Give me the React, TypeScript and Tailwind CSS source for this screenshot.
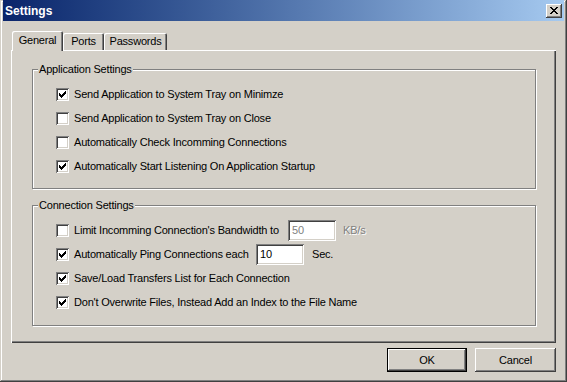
import type { ReactNode } from 'react'

const raised =
  'shadow-[inset_-1px_-1px_#404040,inset_1px_1px_#ffffff,inset_-2px_-2px_#808080,inset_2px_2px_#d4d0c8]'
const sunken =
  'shadow-[inset_1px_1px_#808080,inset_-1px_-1px_#ffffff,inset_2px_2px_#404040,inset_-2px_-2px_#d4d0c8]'

function CheckMark() {
  // classic 7x7 check, 3px tall columns
  const tops = [2, 3, 4, 3, 2, 1, 0]
  return (
    <svg width="7" height="7" viewBox="0 0 7 7" shapeRendering="crispEdges">
      {tops.map((t, i) => (
        <rect key={i} x={i} y={t} width="1" height="3" fill="#000" />
      ))}
    </svg>
  )
}

function CloseGlyph() {
  const rows = ['11000011', '01100110', '00111100', '00011000', '00111100', '01100110', '11000011']
  return (
    <svg width="8" height="7" viewBox="0 0 8 7" shapeRendering="crispEdges">
      {rows.flatMap((r, y) =>
        r.split('').map((c, x) => (c === '1' ? <rect key={`${x}-${y}`} x={x} y={y} width="1" height="1" fill="#000" /> : null))
      )}
    </svg>
  )
}

function Checkbox({ checked }: { checked?: boolean }) {
  return (
    <span className={`w-[13px] h-[13px] shrink-0 bg-white flex items-center justify-center ${sunken}`}>
      {checked && <CheckMark />}
    </span>
  )
}

function Row({ checked, children }: { checked?: boolean; children: ReactNode }) {
  return (
    <div className="h-[24px] flex items-center pl-[23px]">
      <Checkbox checked={checked} />
      <div className="ml-[5px] flex items-center whitespace-nowrap">{children}</div>
    </div>
  )
}

function Group({ title, className, children }: { title: string; className: string; children: ReactNode }) {
  return (
    <div
      className={`relative border border-[#808080] shadow-[1px_1px_0_#ffffff,inset_1px_1px_0_#ffffff] pt-[12px] ${className}`}
    >
      <span className="absolute left-[5px] -top-[7px] px-[1px] leading-[13px] bg-[#d4d0c8]">{title}</span>
      {children}
    </div>
  )
}

function Field({ value, disabled }: { value: string; disabled?: boolean }) {
  return (
    <span
      className={`w-[48px] h-[21px] bg-white flex items-center pl-[4px] ${sunken} ${disabled ? 'text-[#808080]' : 'text-black'}`}
    >
      {value}
    </span>
  )
}

function Tab({ label, active, w }: { label: string; active?: boolean; w: string }) {
  return (
    <div
      className={`${w} flex items-center justify-center bg-[#d4d0c8] rounded-t-[2px] shadow-[inset_1px_1px_#ffffff,inset_-1px_0_#404040,inset_-2px_0_#808080] ${
        active ? 'h-[20px] -mb-[1px] relative z-10 pb-[2px]' : 'h-[17px]'
      }`}
    >
      {label}
    </div>
  )
}

export default function App() {
  return (
    <div
      className={`w-[567px] h-[382px] bg-[#d4d0c8] flex flex-col px-[3px] text-[11px] tracking-[-0.2px] text-black font-['Liberation_Sans',Arial,sans-serif] shadow-[inset_-1px_-1px_#404040,inset_1px_1px_#d4d0c8,inset_-2px_-2px_#808080,inset_2px_2px_#ffffff]`}
    >
      <div className="h-[21px] shrink-0 flex items-center justify-between pl-[2px] pr-[2px] bg-gradient-to-r from-[#0a246a] to-[#a6caf0]">
        <span className="text-white font-bold text-[12px] tracking-normal">Settings</span>
        <button className={`w-[16px] h-[14px] bg-[#d4d0c8] flex items-center justify-center ${raised}`}>
          <CloseGlyph />
        </button>
      </div>

      <div className="mx-[8px] mt-[10px] flex flex-col">
        <div className="flex items-end pl-[1px] leading-[13px]">
          <Tab label="General" active w="w-[51px]" />
          <Tab label="Ports" w="w-[41px]" />
          <Tab label="Passwords" w="w-[63px]" />
        </div>
        <div
          className={`h-[293px] pt-[19px] pl-[21px] pr-[20px] flex flex-col gap-[16px] shadow-[inset_1px_1px_#ffffff,inset_-1px_-1px_#404040,inset_-2px_-2px_#808080]`}
        >
          <Group title="Application Settings" className="h-[120px]">
            <Row checked>Send Application to System Tray on Minimze</Row>
            <Row>Send Application to System Tray on Close</Row>
            <Row>Automatically Check Incomming Connections</Row>
            <Row checked>Automatically Start Listening On Application Startup</Row>
          </Group>
          <Group title="Connection Settings" className="h-[121px]">
            <Row>
              <span className="w-[214px]">Limit Incomming Connection's Bandwidth to</span>
              <Field value="50" disabled />
              <span className="ml-[7px] text-[#808080] [text-shadow:1px_1px_0_#ffffff]">KB/s</span>
            </Row>
            <Row checked>
              <span className="w-[182px]">Automatically Ping Connections each</span>
              <Field value="10" />
              <span className="ml-[8px]">Sec.</span>
            </Row>
            <Row checked>Save/Load Transfers List for Each Connection</Row>
            <Row checked>Don't Overwrite Files, Instead Add an Index to the File Name</Row>
          </Group>
        </div>
      </div>

      <div className="mt-[5px] mr-[8px] flex justify-end gap-[8px]">
        <button className="w-[80px] h-[24px] border border-black">
          <span className={`w-full h-full flex items-center justify-center ${raised}`}>OK</span>
        </button>
        <button className={`w-[81px] h-[24px] flex items-center justify-center ${raised}`}>Cancel</button>
      </div>
    </div>
  )
}
